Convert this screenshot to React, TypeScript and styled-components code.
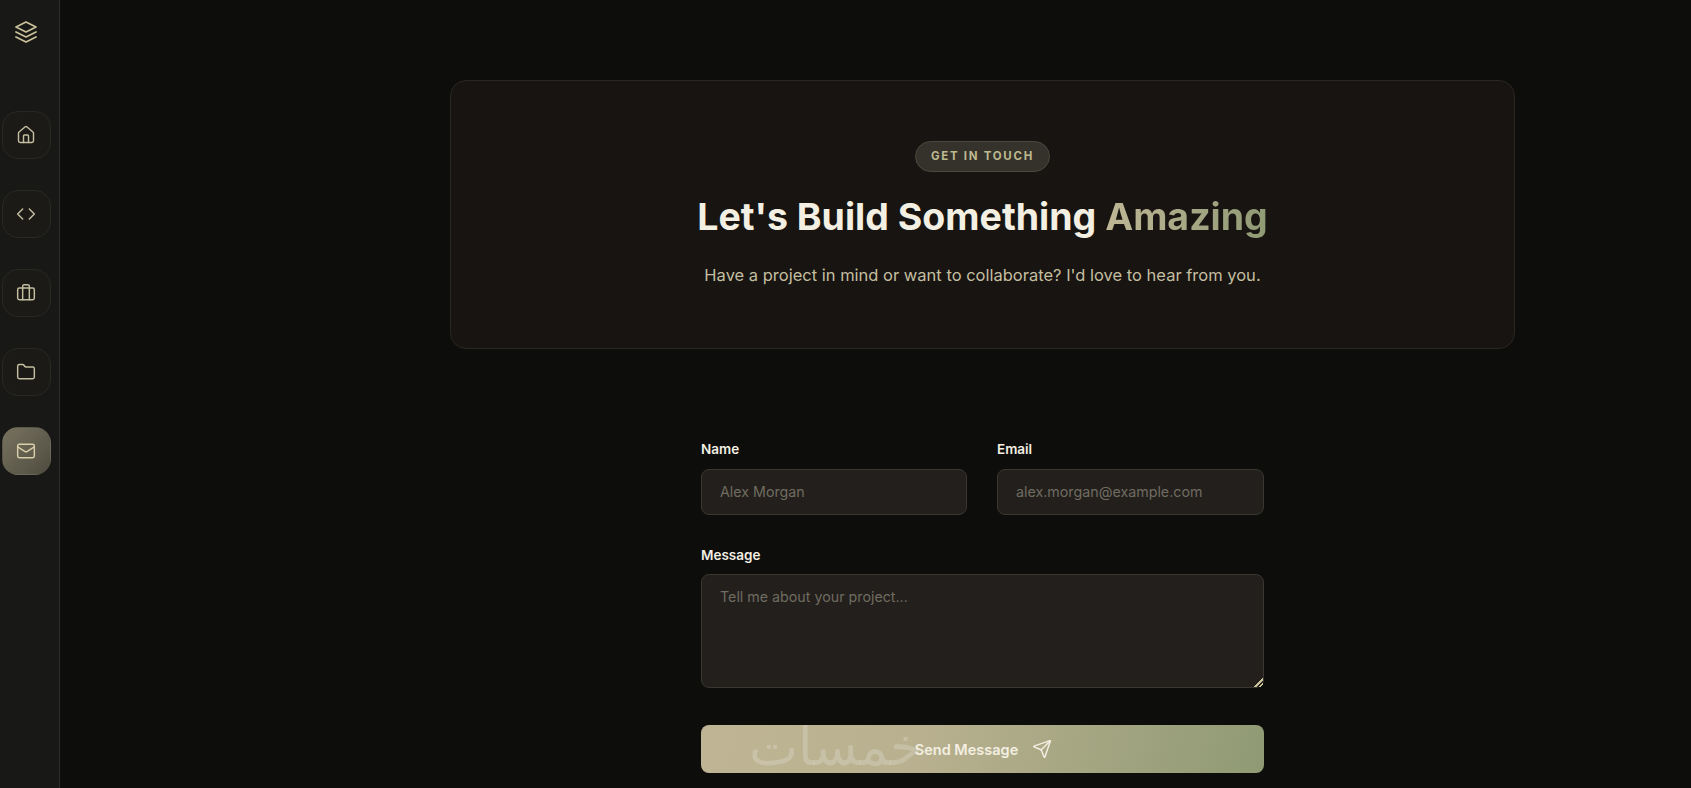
import React from 'react';
import styled, { createGlobalStyle } from 'styled-components';
import { House, Code, Briefcase, Folder, Mail, Send } from 'lucide-react';

const GlobalStyle = createGlobalStyle`
  html, body {
    margin: 0;
    height: 100%;
    overflow: hidden;
    background: #0d0d0c;
    font-family: Inter, "Noto Sans", sans-serif;
  }
  * {
    box-sizing: border-box;
  }
`;

const navItems = [
  { id: 'home', Icon: House },
  { id: 'code', Icon: Code },
  { id: 'work', Icon: Briefcase },
  { id: 'projects', Icon: Folder },
  { id: 'contact', Icon: Mail, active: true },
];

const LayersLogo = () => (
  <svg
    width="24"
    height="24"
    viewBox="0 0 24 24"
    fill="none"
    stroke="currentColor"
    strokeWidth="1.75"
    strokeLinecap="round"
    strokeLinejoin="round"
  >
    <polygon points="12 2 2 7 12 12 22 7 12 2" />
    <polyline points="2 17 12 22 22 17" />
    <polyline points="2 12 12 17 22 12" />
  </svg>
);

const App = () => {
  return (
    <Page>
      <GlobalStyle />
      <Sidebar>
        <Logo>
          <LayersLogo />
        </Logo>
        <Nav>
          {navItems.map(({ id, Icon, active }) => (
            <NavButton key={id} $active={active}>
              <Icon size={20} strokeWidth={1.75} />
            </NavButton>
          ))}
        </Nav>
      </Sidebar>
      <Main>
        <Hero>
          <Chip>GET IN TOUCH</Chip>
          <Title>
            Let's Build Something <Accent>Amazing</Accent>
          </Title>
          <Subtitle>Have a project in mind or want to collaborate? I'd love to hear from you.</Subtitle>
        </Hero>
        <Form>
          <Row>
            <Field>
              <Label>Name</Label>
              <Input placeholder="Alex Morgan" />
            </Field>
            <Field>
              <Label>Email</Label>
              <Input placeholder="alex.morgan@example.com" />
            </Field>
          </Row>
          <Field $gap={14}>
            <Label>Message</Label>
            <TextArea placeholder="Tell me about your project..." />
          </Field>
          <SubmitButton type="button">
            <Watermark>خمسات</Watermark>
            <SubmitLabel>Send Message</SubmitLabel>
            <Send size={20} strokeWidth={1.75} />
          </SubmitButton>
        </Form>
      </Main>
    </Page>
  );
};

export default App;

const Page = styled.div`
  display: flex;
  height: 788px;
  overflow: hidden;
`;

const Sidebar = styled.aside`
  flex: none;
  width: 60px;
  padding: 20px 0 0 2px;
  background: #181816;
  border-right: 1px solid #2e2d2a;
`;

const Logo = styled.div`
  display: flex;
  justify-content: center;
  width: 48px;
  color: #c9c199;
`;

const Nav = styled.nav`
  display: flex;
  flex-direction: column;
  gap: 31px;
  margin-top: 67px;
`;

const NavButton = styled.div<{ $active?: boolean }>`
  display: flex;
  align-items: center;
  justify-content: center;
  width: 49px;
  height: 48px;
  padding-right: 1px;
  border-radius: 16px;
  color: ${({ $active }) => ($active ? '#d8cfa8' : '#c4bea0')};
  background: ${({ $active }) =>
    $active ? 'linear-gradient(135deg, #77725f, #4f4c40)' : '#1b1a17'};
  border: 1px solid ${({ $active }) => ($active ? 'transparent' : '#2a2823')};
`;

const Main = styled.main`
  flex: 1;
  padding: 80px 176px 0 390px;
`;

const Hero = styled.section`
  display: flex;
  flex-direction: column;
  align-items: center;
  height: 269px;
  padding-top: 60px;
  background: #171411;
  border: 1px solid #2a2722;
  border-radius: 16px;
`;

const Chip = styled.div`
  display: flex;
  align-items: center;
  height: 31px;
  padding: 0 15px 2px;
  color: #bdb98f;
  font-size: 11.5px;
  font-weight: 700;
  letter-spacing: 0.15em;
  background: #35322b;
  border: 1px solid #4a473c;
  border-radius: 999px;
`;

const Title = styled.h1`
  margin: 23px 0 0;
  color: #f3efe2;
  font-size: 37.5px;
  font-weight: 700;
  line-height: 44px;
`;

const Accent = styled.span`
  color: transparent;
  background: linear-gradient(90deg, #bfb796, #8f9a74);
  -webkit-background-clip: text;
  background-clip: text;
`;

const Subtitle = styled.p`
  margin: 24px 0 0;
  color: #c4bea0;
  font-size: 16.5px;
  line-height: 24px;
`;

const Form = styled.form`
  display: flex;
  flex-direction: column;
  gap: 35px;
  width: 563px;
  margin: 95px auto 0;
`;

const Row = styled.div`
  display: grid;
  grid-template-columns: 266px 267px;
  gap: 30px;
`;

const Field = styled.div<{ $gap?: number }>`
  display: flex;
  flex-direction: column;
  gap: ${({ $gap }) => $gap ?? 15}px;
`;

const Label = styled.label`
  color: #f3efe2;
  font-size: 13.5px;
  font-weight: 600;
  line-height: 10px;
`;

const Input = styled.input`
  height: 46px;
  padding: 0 18px 1px;
  color: #f3efe2;
  font-family: inherit;
  font-size: 14.25px;
  background: #231f1c;
  border: 1px solid #3a3731;
  border-radius: 8px;
  outline: none;

  &::placeholder {
    color: #6f6c60;
  }
`;

const TextArea = styled.textarea`
  height: 114px;
  padding: 13px 18px;
  color: #f3efe2;
  font-family: inherit;
  font-size: 14.25px;
  background: #231f1c;
  border: 1px solid #3a3731;
  border-radius: 8px;
  outline: none;
  resize: vertical;

  &::placeholder {
    color: #6f6c60;
  }

  &::-webkit-resizer {
    background: linear-gradient(
      135deg,
      transparent 68%,
      #c9c199 68%,
      #c9c199 78%,
      transparent 78%,
      transparent 84%,
      #c9c199 84%,
      #c9c199 92%,
      transparent 92%
    );
  }
`;

const SubmitButton = styled.button`
  position: relative;
  display: flex;
  align-items: center;
  justify-content: center;
  gap: 14px;
  height: 48px;
  margin-top: 2px;
  padding-left: 8px;
  color: #f3efe2;
  font-family: inherit;
  font-size: 14.5px;
  font-weight: 600;
  background: linear-gradient(105deg, #bfb594 0%, #b8b08e 40%, #8f9a74 100%);
  border: none;
  border-radius: 8px;
`;

const SubmitLabel = styled.span`
  position: relative;
`;

const Watermark = styled.span`
  position: absolute;
  top: 0;
  left: 48px;
  color: rgba(215, 210, 195, 0.45);
  font-family: "DejaVu Sans", sans-serif;
  font-size: 52px;
  font-weight: 400;
  line-height: 44px;
`;
